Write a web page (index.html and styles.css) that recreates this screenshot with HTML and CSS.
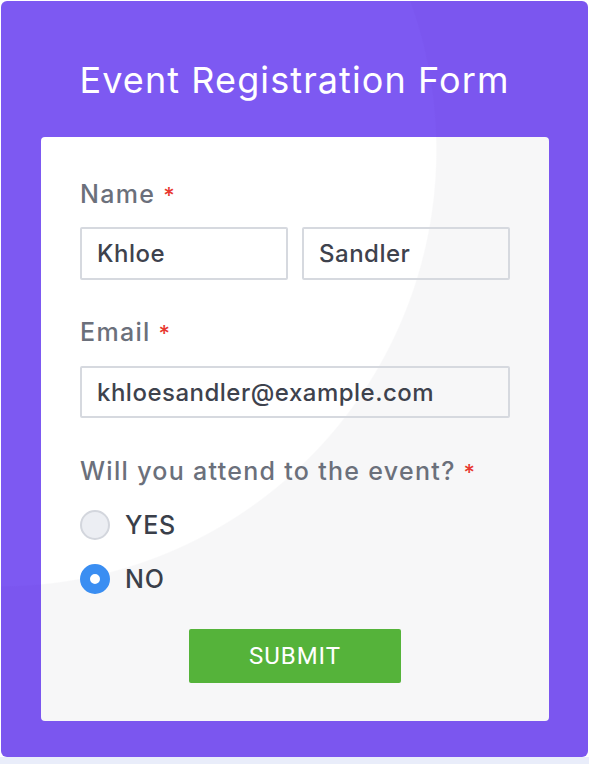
FILE: index.html
```html
<!DOCTYPE html>
<html lang="en">
<head>
<meta charset="utf-8">
<title>Event Registration Form</title>
<link rel="stylesheet" href="styles.css">
</head>
<body>
<div class="panel">
  <h1 class="title">Event Registration Form</h1>
  <form class="card">
    <div class="label">Name <span class="req">*</span></div>
    <div class="name-row">
      <input class="field" type="text" value="Khloe">
      <input class="field" type="text" value="Sandler">
    </div>
    <div class="label label-gap">Email <span class="req">*</span></div>
    <input class="field field-wide" type="text" value="khloesandler@example.com">
    <div class="label label-gap2">Will you attend to the event? <span class="req">*</span></div>
    <div class="options">
      <label class="option"><span class="radio"></span><span class="opt-text">YES</span></label>
      <label class="option"><span class="radio checked"></span><span class="opt-text">NO</span></label>
    </div>
    <div class="actions">
      <button type="button" class="submit">SUBMIT</button>
    </div>
  </form>
</div>
<div class="strip"></div>
</body>
</html>
```

FILE: styles.css
```css
* { box-sizing: border-box; }
html, body { margin: 0; padding: 0; background: #ffffff; }
body { font-family: Inter, "Open Sans", sans-serif; }

.panel {
  margin: 1px 1px 0 1px;
  height: 756px;
  border-radius: 6px;
  background: radial-gradient(circle 437px at -1px 149px, #7d59f2 99.7%, #7b56ef 100%);
  padding-top: 57px;
}

.title {
  margin: 0;
  font-size: 36px;
  line-height: 44px;
  font-weight: 400;
  letter-spacing: 1.1px;
  color: #ffffff;
  text-align: center;
}

.card {
  margin: 35px 39px 0 40px;
  height: 584px;
  border-radius: 4px;
  background: radial-gradient(circle 437px at -41px 13px, #ffffff 99.7%, #f7f7f8 100%);
  padding: 42px 39px 0 39px;
}

.label {
  font-size: 25px;
  line-height: 30px;
  font-weight: 500;
  letter-spacing: 1.3px;
  color: #6b707b;
}
.req { color: #e8382f; font-size: 22px; letter-spacing: 0; }
.label-gap { margin-top: 37px; }
.label-gap2 { margin-top: 38px; }

.name-row {
  margin-top: 17px;
  display: grid;
  grid-template-columns: 1fr 1fr;
  gap: 14px;
}

.field {
  display: block;
  width: 100%;
  height: 53px;
  border: 2px solid #d6d9df;
  border-radius: 2px;
  background: transparent;
  padding: 0 15px;
  font-family: Inter, "Open Sans", sans-serif;
  font-size: 24px;
  font-weight: 500;
  letter-spacing: 0.5px;
  color: #3e424d;
  outline: none;
}
.field-wide { margin-top: 18px; height: 52px; }

.options {
  margin-top: 23px;
  display: flex;
  flex-direction: column;
  gap: 24px;
}
.option {
  display: flex;
  align-items: center;
  gap: 15px;
  height: 30px;
}
.radio {
  width: 30px;
  height: 30px;
  border-radius: 50%;
  background: #eceef3;
  border: 2px solid #d3d6dd;
  flex: none;
}
.radio.checked {
  background: #ffffff;
  border: 10px solid #3a8ef2;
}
.opt-text {
  font-size: 25px;
  font-weight: 500;
  letter-spacing: 0.8px;
  color: #3a3f4a;
}

.actions {
  margin-top: 35px;
  display: flex;
  justify-content: center;
}
.submit {
  width: 212px;
  height: 54px;
  border: none;
  border-radius: 2px;
  background: #55b33a;
  color: #ffffff;
  font-family: Roboto, sans-serif;
  font-size: 24px;
  font-weight: 400;
  letter-spacing: 1px;
}

.strip { height: 7px; background: #e9edfa; }
```
